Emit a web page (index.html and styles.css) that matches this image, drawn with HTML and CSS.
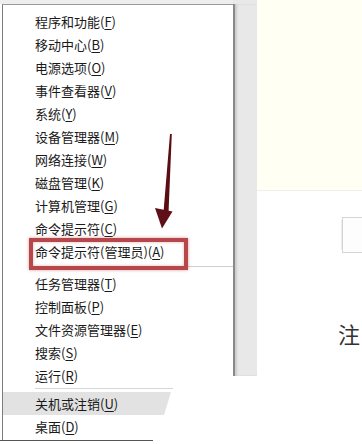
FILE: index.html
```html
<!DOCTYPE html>
<html lang="zh-CN">
<head>
<meta charset="utf-8">
<title>Win+X 菜单</title>
<link rel="stylesheet" href="styles.css">
</head>
<body>
<div class="screen">
  <div class="menu-col">
    <div class="menu">
      <div class="item">程序和功能(<u>F</u>)</div>
      <div class="item">移动中心(<u>B</u>)</div>
      <div class="item">电源选项(<u>O</u>)</div>
      <div class="item">事件查看器(<u>V</u>)</div>
      <div class="item">系统(<u>Y</u>)</div>
      <div class="item">设备管理器(<u>M</u>)</div>
      <div class="item">网络连接(<u>W</u>)</div>
      <div class="item">磁盘管理(<u>K</u>)</div>
      <div class="item">计算机管理(<u>G</u>)</div>
      <div class="item">命令提示符(<u>C</u>)</div>
      <div class="item">命令提示符(管理员)(<u>A</u>)</div>
      <div class="sep sep-one"></div>
      <div class="item">任务管理器(<u>T</u>)</div>
      <div class="item">控制面板(<u>P</u>)</div>
      <div class="item">文件资源管理器(<u>E</u>)</div>
      <div class="item">搜索(<u>S</u>)</div>
      <div class="item">运行(<u>R</u>)</div>
      <div class="sep sep-two"></div>
      <div class="item item-hover">关机或注销(<u>U</u>)</div>
      <div class="item">桌面(<u>D</u>)</div>
      <div class="menu-bottom"></div>
    </div>
  </div>
  <div class="edge-col">
    <div class="edge"></div>
  </div>
  <div class="content">
    <div class="banner"></div>
    <div class="field-row">
      <div class="field"></div>
    </div>
    <div class="note">注</div>
  </div>

  <div class="highlight-box"></div>
  <svg class="arrow" width="30" height="105" viewBox="150 130 30 105" aria-hidden="true">
    <polygon points="170,134 171.8,134 168.6,211 163.6,211" fill="#5a0e13"/>
    <polygon points="155,208 172.5,211.5 162,228.5" fill="#5e1016"/>
  </svg>
</div>
</body>
</html>
```

FILE: styles.css
```css
html, body {
  margin: 0;
  padding: 0;
  background: #ffffff;
}

body {
  width: 362px;
  height: 444px;
  overflow: hidden;
  font-family: "Noto Sans CJK SC", "Microsoft YaHei", sans-serif;
}

.screen {
  position: relative;
  display: flex;
  width: 362px;
  height: 444px;
}

.menu-col {
  width: 233px;
  flex: none;
  background: linear-gradient(#eeeeee 0 4px, #ffffff 4px);
  padding: 4px 0 0 2px;
  box-sizing: border-box;
}

.menu {
  background: #ffffff;
  border-top: 1px solid #9a9a9a;
  border-left: 1px solid #7d7d7d;
  padding-top: 5px;
  display: flex;
  flex-direction: column;
}

.item {
  height: 23px;
  line-height: 23px;
  padding-left: 32px;
  font-size: 13px;
  color: #1a1a1a;
  white-space: nowrap;
}

.item u {
  text-decoration-thickness: 1px;
  text-underline-offset: 2px;
}

.item-hover {
  background: #e2e2e2;
  margin-right: 62px;
  clip-path: polygon(0 0, 100% 0, calc(100% - 7px) 100%, 0 100%);
}

.sep {
  height: 1px;
  background: #cfcfcf;
  margin-left: 32px;
}

.sep-one {
  margin-top: 3px;
  margin-bottom: 5px;
}

.sep-two {
  margin-top: 1px;
  margin-bottom: 3px;
  margin-right: 60px;
  background: #d6d6d6;
}

.menu-bottom {
  margin-top: 2px;
  margin-left: -3px;
  width: 153px;
  height: 1px;
  background: #555555;
}

.edge-col {
  width: 24px;
  flex: none;
  background: linear-gradient(#e8e8e8 0 376px, #ffffff 376px);
  padding-top: 4px;
  box-sizing: border-box;
}

.edge {
  height: 372px;
  border-left: 2px solid #8a8a8a;
  box-shadow: inset 2px 0 2px rgba(0, 0, 0, 0.12);
}

.content {
  flex: 1;
  display: flex;
  flex-direction: column;
}

.banner {
  height: 190px;
  background: #fffff3;
  border-bottom: 1px solid #f1f0e6;
}

.field-row {
  margin-top: 26px;
  padding-left: 81px;
}

.field {
  height: 34px;
  margin-left: 4px;
  border: 1px solid #d4d4d4;
  border-right: none;
  box-shadow: -4px 0 0 -3px #ececec;
  background: #fdfdfd;
}

.note {
  margin-top: 67px;
  padding-left: 81px;
  font-size: 22px;
  line-height: 26px;
  color: #333333;
}

.highlight-box {
  position: absolute;
  left: 29px;
  top: 238px;
  width: 159px;
  height: 32px;
  box-sizing: border-box;
  border: 4px solid #b6474b;
  box-shadow: 0 0 3px rgba(190, 70, 75, 0.55), inset 0 0 3px rgba(190, 70, 75, 0.45);
}

.arrow {
  position: absolute;
  left: 150px;
  top: 130px;
}
```
